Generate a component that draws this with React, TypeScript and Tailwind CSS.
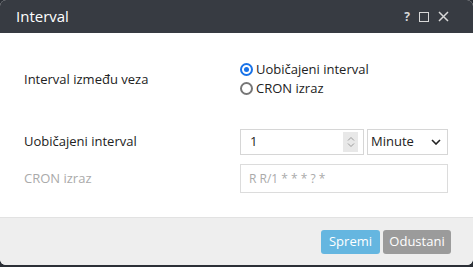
import { useState } from "react";

const font = { fontFamily: '"Open Sans", "Noto Sans", sans-serif' };

function Radio({ checked, label, onClick }: { checked: boolean; label: string; onClick: () => void }) {
  return (
    <button onClick={onClick} className="flex items-center gap-[3px] h-[19px] text-[13px] text-[#222]">
      <span
        className={`w-[13px] h-[13px] rounded-full border-2 flex items-center justify-center ${
          checked ? "border-[#1a73e8]" : "border-[#777]"
        }`}
      >
        {checked && <span className="w-[5px] h-[5px] rounded-full bg-[#1a73e8]" />}
      </span>
      {label}
    </button>
  );
}

export default function App() {
  const [mode, setMode] = useState<"interval" | "cron">("interval");

  return (
    <div className="w-[473px] h-[267px] bg-[#2b2f36] overflow-hidden" style={font}>
      <div className="h-[265px] bg-white rounded-[6px] overflow-hidden flex flex-col">
        {/* naslov */}
        <div className="h-[33px] bg-[#373b42] flex items-center justify-between pl-4 pr-[24px]">
          <span className="text-white text-[15px]">Interval</span>
          <div className="flex items-center gap-[9px] text-[#d8d8d8]">
            <span className="text-[12px] font-bold">?</span>
            <span className="w-[10px] h-[10px] border border-[#d8d8d8]" />
            <svg width="11" height="11" viewBox="0 0 11 11" stroke="#d8d8d8" strokeWidth="1.5">
              <path d="M1 1 L10 10 M10 1 L1 10" />
            </svg>
          </div>
        </div>

        {/* sadržaj */}
        <div className="flex-1 pl-6 pr-6">
          <div className="flex mt-[27px]">
            <div className="w-[216px] pt-[10px] text-[13px] text-[#222]">Interval između veza</div>
            <div className="flex flex-col">
              <Radio checked={mode === "interval"} label="Uobičajeni interval" onClick={() => setMode("interval")} />
              <Radio checked={mode === "cron"} label="CRON izraz" onClick={() => setMode("cron")} />
            </div>
          </div>

          <div className="flex items-center mt-[31px]">
            <div className="w-[216px] text-[13px] text-[#222]">Uobičajeni interval</div>
            <div className="flex gap-[3px]">
              <div className="w-[124px] h-[26px] border border-[#d6d6d6] flex items-center justify-between pl-[9px] pr-[5px] text-[13px] text-[#222]">
                <span>1</span>
                <span className="w-[15px] h-[20px] bg-[#e8e8e8] flex items-center justify-center">
                  <svg width="8" height="12" viewBox="0 0 8 12" fill="none" stroke="#999" strokeWidth="1">
                    <path d="M1 4.5 L4 1.5 L7 4.5 M1 7.5 L4 10.5 L7 7.5" />
                  </svg>
                </span>
              </div>
              <div className="w-[81px] h-[26px] border border-[#d6d6d6] flex items-center justify-between pl-[3px] pr-[6px] text-[13px] text-[#222]">
                <span>Minute</span>
                <svg width="10" height="6" viewBox="0 0 10 6" fill="none" stroke="#222" strokeWidth="1.6">
                  <path d="M1 1 L5 5 L9 1" />
                </svg>
              </div>
            </div>
          </div>

          <div className="flex items-center mt-[9px]">
            <div className="w-[216px] text-[13px] text-[#aaa]">CRON izraz</div>
            <div className="w-[208px] h-[29px] border border-[#dcdcdc] flex items-center pl-[8px] text-[12px] text-[#aaa]">
              R R/1 * * * ? *
            </div>
          </div>
        </div>

        {/* podnožje */}
        <div className="h-[48px] bg-[#eeeeee] border-t border-[#e2e2e2] flex items-start justify-end gap-[3px] pt-[12px] pr-[22px]">
          <button className="w-[59px] h-[24px] rounded-[3px] bg-[#65b6e0] text-white text-[13px]">Spremi</button>
          <button className="w-[68px] h-[24px] rounded-[3px] bg-[#9b9b9b] text-white text-[13px]">Odustani</button>
        </div>
      </div>
    </div>
  );
}
